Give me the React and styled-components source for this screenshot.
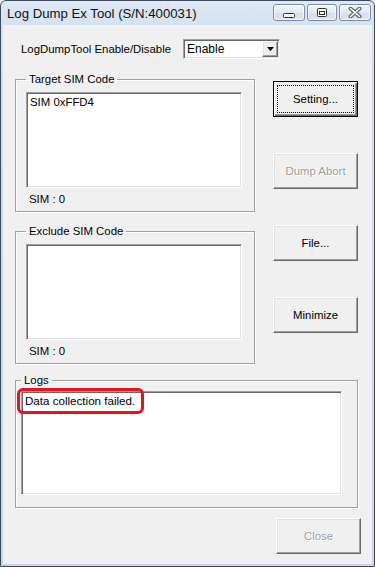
import React from 'react'
import styled, { createGlobalStyle, css } from 'styled-components'

const GlobalStyle = createGlobalStyle`
  html, body { margin: 0; padding: 0; background: #ffffff; }
  body { font-family: "Liberation Sans", Arial, sans-serif; }
`

const Window = styled.div`
  width: 375px;
  height: 567px;
  box-sizing: border-box;
  border: 1px solid #3b4b5f;
  border-radius: 6px 6px 0 0;
  background: linear-gradient(#e0e9f4, #d2e0f0 30px, #c2d7ee);
  padding: 0 2px 2px;
  display: flex;
  flex-direction: column;
`

const TitleBar = styled.div`
  height: 24px;
  display: flex;
  align-items: flex-start;
  padding: 0 1px 0 4px;
`

const Title = styled.span`
  flex: 1;
  font-size: 13.2px;
  line-height: 25px;
  color: #111;
  white-space: nowrap;
`

const TitleButtons = styled.div`
  display: flex;
  gap: 2px;
  margin-top: 3px;
`

const TitleButton = styled.span`
  width: ${p => p.$w}px;
  height: 17px;
  box-sizing: border-box;
  border: 1px solid #7a8ca6;
  border-radius: 3px;
  background: linear-gradient(#f3f6fa, #e2e9f2 50%, #d5dfeb 51%, #dce5f0);
  box-shadow: inset 0 0 0 1px rgba(255, 255, 255, 0.7);
  display: flex;
  align-items: center;
  justify-content: center;
`

const Client = styled.div`
  flex: 1;
  background: #f0f0f0;
  display: flex;
  flex-direction: column;
  font-size: 11px;
  color: #000;
`

const TopRow = styled.div`
  display: flex;
  align-items: center;
  margin-top: 14px;
  padding-left: 18px;
  height: 20px;
`

const Label = styled.span`
  width: 162px;
  font-size: 11.4px;
  white-space: nowrap;
`

const Sunken = css`
  box-sizing: border-box;
  background: #ffffff;
  border: 1px solid;
  border-color: #a0a0a0 #ffffff #ffffff #a0a0a0;
  box-shadow: inset 1px 1px 0 #696969, inset -1px -1px 0 #e3e3e3;
`

const Raised = css`
  box-sizing: border-box;
  background: #f0f0f0;
  border: 1px solid;
  border-color: #ffffff #696969 #696969 #ffffff;
  box-shadow: inset -1px -1px 0 #a0a0a0, inset 1px 1px 0 #e3e3e3;
`

const Select = styled.div`
  ${Sunken};
  width: 97px;
  height: 20px;
  padding: 1px;
  display: flex;
  align-items: center;
`

const SelectText = styled.span`
  flex: 1;
  padding-left: 2px;
  font-size: 12px;
`

const SelectArrow = styled.span`
  ${Raised};
  width: 16px;
  height: 16px;
  display: flex;
  align-items: center;
  justify-content: center;
`

const Main = styled.div`
  display: flex;
  margin-top: 13px;
  padding-left: 12px;
`

const LeftCol = styled.div`
  width: 240px;
  display: flex;
  flex-direction: column;
  gap: 12px;
`

const RightCol = styled.div`
  width: 85px;
  margin-left: 18px;
  padding-top: 9px;
  display: flex;
  flex-direction: column;
  gap: 36px;
`

const Group = styled.fieldset`
  margin: 0;
  min-inline-size: 0;
  box-sizing: border-box;
  width: ${p => p.$w}px;
  border: 1px solid #a0a0a0;
  box-shadow: 1px 1px 0 #ffffff, inset 1px 1px 0 #ffffff;
  padding: ${p => p.$pt}px 0 ${p => p.$pb}px ${p => p.$pl}px;
`

const Legend = styled.legend`
  padding: 0 3px;
  font-size: 11.4px;
  line-height: 14px;
`

const ListBox = styled.div`
  ${Sunken};
  position: relative;
  width: ${p => p.$w}px;
  height: ${p => p.$h}px;
  padding: 2px 3px;
  font-size: ${p => p.$fs || 11.4}px;
  line-height: 14px;
  white-space: nowrap;
`

const Count = styled.div`
  margin-top: 4px;
  padding-left: 3px;
  line-height: 14px;
  font-size: 11.4px;
`

const Button = styled.button`
  ${Raised};
  position: relative;
  width: 85px;
  height: 36px;
  padding: 0;
  font-family: "Liberation Sans", Arial, sans-serif;
  font-size: 11.4px;
  color: #000;
  ${p => p.$default && css`
    border: 1px solid #000;
    box-shadow: inset 1px 1px 0 #ffffff, inset -1px -1px 0 #696969, inset -2px -2px 0 #a0a0a0;
    &::after {
      content: "";
      position: absolute;
      inset: 3px;
      border: 1px dotted #000;
    }
  `}
  &:disabled {
    color: #a0a0a0;
    text-shadow: 1px 1px 0 #ffffff;
  }
`

const LogsWrap = styled.div`
  margin: 9px 0 0 12px;
`

const Highlight = styled.div`
  position: absolute;
  left: -5px;
  top: -4px;
  width: 127px;
  height: 26px;
  box-sizing: border-box;
  border: 3px solid #e8121a;
  border-radius: 6px;
`

const Footer = styled.div`
  display: flex;
  justify-content: flex-end;
  margin-top: 10px;
  padding-right: 11px;
`

const MinIcon = () => (
  <svg width="12" height="10" viewBox="0 0 12 10">
    <rect x="0.5" y="5.5" width="11" height="4" rx="1" fill="#fff" stroke="#2f2f2f" />
  </svg>
)

const MaxIcon = () => (
  <svg width="12" height="10" viewBox="0 0 12 10">
    <rect x="1.5" y="0.5" width="9" height="8" rx="1" fill="#fff" stroke="#2f2f2f" />
    <rect x="3.5" y="3.5" width="5" height="3" fill="#fff" stroke="#2f2f2f" />
  </svg>
)

const CloseIcon = () => (
  <svg width="14" height="11" viewBox="0 0 14 11">
    <path d="M2.5 1.5 L11.5 9.5 M11.5 1.5 L2.5 9.5" stroke="#666" strokeWidth="4" strokeLinecap="round" />
    <path d="M2.5 1.5 L11.5 9.5 M11.5 1.5 L2.5 9.5" stroke="#fff" strokeWidth="1.6" strokeLinecap="round" />
  </svg>
)

const DownArrow = () => (
  <svg width="7" height="4" viewBox="0 0 7 4">
    <path d="M0 0 H7 L3.5 4 Z" fill="#000" />
  </svg>
)

const SimGroup = ({ title, items, count }) => (
  <Group $w={240} $pt={6} $pb={5} $pl={10}>
    <Legend>{title}</Legend>
    <ListBox $w={216} $h={96}>
      {items.map(it => <div key={it}>{it}</div>)}
    </ListBox>
    <Count>SIM : {count}</Count>
  </Group>
)

const App = () => {
  return (
    <>
      <GlobalStyle />
      <Window>
        <TitleBar>
          <Title>Log Dump Ex Tool (S/N:400031)</Title>
          <TitleButtons>
            <TitleButton $w={32}><MinIcon /></TitleButton>
            <TitleButton $w={30}><MaxIcon /></TitleButton>
            <TitleButton $w={32}><CloseIcon /></TitleButton>
          </TitleButtons>
        </TitleBar>
        <Client>
          <TopRow>
            <Label>LogDumpTool Enable/Disable</Label>
            <Select>
              <SelectText>Enable</SelectText>
              <SelectArrow><DownArrow /></SelectArrow>
            </Select>
          </TopRow>

          <Main>
            <LeftCol>
              <SimGroup title="Target SIM Code" items={['SIM 0xFFD4']} count={0} />
              <SimGroup title="Exclude SIM Code" items={[]} count={0} />
            </LeftCol>
            <RightCol>
              <Button $default>Setting...</Button>
              <Button disabled>Dump Abort</Button>
              <Button>File...</Button>
              <Button>Minimize</Button>
            </RightCol>
          </Main>

          <LogsWrap>
            <Group $w={343} $pt={4} $pb={12} $pl={5}>
              <Legend>Logs</Legend>
              <ListBox $w={321} $h={104} $fs={11.6}>
                Data collection failed.
                <Highlight />
              </ListBox>
            </Group>
          </LogsWrap>

          <Footer>
            <Button disabled>Close</Button>
          </Footer>
        </Client>
      </Window>
    </>
  )
}

export default App
